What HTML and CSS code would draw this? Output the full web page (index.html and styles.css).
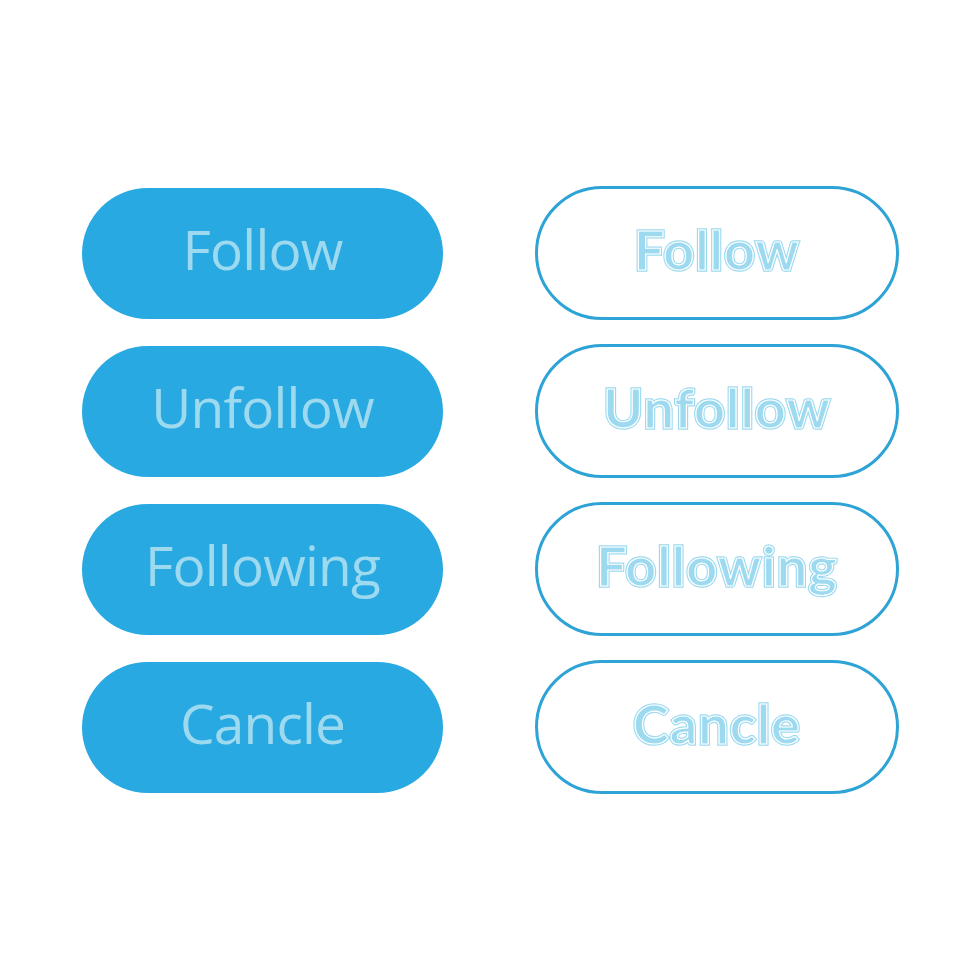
FILE: index.html
```html
<html lang="en">
<head>
  <title>Follow Buttons</title>
  <link rel="stylesheet" href="styles.css">
</head>
<body>
  <main class="board">
    <button class="btn solid">Follow</button>
    <button class="btn outline"><span class="label" data-label="Follow">Follow</span></button>

    <button class="btn solid">Unfollow</button>
    <button class="btn outline"><span class="label" data-label="Unfollow">Unfollow</span></button>

    <button class="btn solid">Following</button>
    <button class="btn outline"><span class="label" data-label="Following">Following</span></button>

    <button class="btn solid">Cancle</button>
    <button class="btn outline"><span class="label" data-label="Cancle">Cancle</span></button>
  </main>
</body>
</html>
```

FILE: styles.css
```css
:root {
  --blue: #29a9e1;
  --line-blue: #2ea3d6;
  --pale: #9ddaef;
}

body {
  margin: 0;
  background: #fff;
}

.board {
  display: grid;
  grid-template-columns: 361px 364px;
  grid-auto-rows: 134px;
  column-gap: 92px;
  row-gap: 24px;
  padding: 186px 0 0 82px;
  align-items: center;
}

.btn {
  margin: 0;
  padding: 0;
  border: 0;
  cursor: pointer;
  display: flex;
  align-items: center;
  justify-content: center;
  border-radius: 999px;
}

/* filled pill on the left */
.solid {
  height: 131px;
  background: var(--blue);
  color: var(--pale);
  font-family: "Open Sans", sans-serif;
  font-size: 55px;
  letter-spacing: -0.8px;
  padding-bottom: 9px;
}

/* outlined pill on the right */
.outline {
  height: 134px;
  background: #fff;
  border: 3px solid var(--line-blue);
  box-sizing: border-box;
  padding-bottom: 8px;
}

.outline .label {
  position: relative;
  font-family: Lato, sans-serif;
  font-weight: 700;
  font-size: 54px;
  letter-spacing: 1px;
  color: var(--pale);
  -webkit-text-stroke: 3.5px var(--pale);
}

/* thin white inline on top of the thick stroke */
.outline .label::after {
  content: attr(data-label);
  position: absolute;
  left: 0;
  top: 0;
  color: var(--pale);
  -webkit-text-stroke: 1.2px #fff;
}
```
